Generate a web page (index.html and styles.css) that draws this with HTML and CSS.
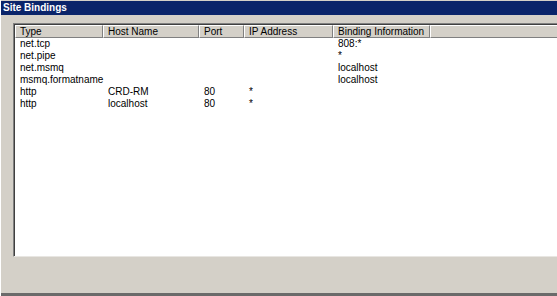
FILE: index.html
```html
<!DOCTYPE html>
<html lang="en">
<head>
  <meta charset="UTF-8">
  <title>Site Bindings</title>
  <link rel="stylesheet" href="styles.css">
</head>
<body>
  <div class="window">
    <div class="titlebar">Site Bindings</div>
    <div class="content">
      <div class="listview">
        <div class="header">
          <div class="col">Type</div>
          <div class="col">Host Name</div>
          <div class="col">Port</div>
          <div class="col">IP Address</div>
          <div class="col">Binding Information</div>
          <div class="col filler"></div>
        </div>
        <div class="rows">
          <div class="row"><span>net.tcp</span><span></span><span></span><span></span><span>808:*</span></div>
          <div class="row"><span>net.pipe</span><span></span><span></span><span></span><span>*</span></div>
          <div class="row"><span>net.msmq</span><span></span><span></span><span></span><span>localhost</span></div>
          <div class="row"><span>msmq.formatname</span><span></span><span></span><span></span><span>localhost</span></div>
          <div class="row"><span>http</span><span>CRD-RM</span><span>80</span><span>*</span><span></span></div>
          <div class="row"><span>http</span><span>localhost</span><span>80</span><span>*</span><span></span></div>
        </div>
      </div>
    </div>
    <div class="footer"></div>
  </div>
</body>
</html>
```

FILE: styles.css
```css
body {
  margin: 0;
  background: #d4d0c8;
  font-family: "Liberation Sans", Arial, sans-serif;
  font-size: 10px;
  color: #000;
}
.window {
  width: 557px;
  height: 296px;
  display: flex;
  flex-direction: column;
  border-left: 1px solid #ffffff;
  box-sizing: border-box;
  overflow: hidden;
}
.titlebar {
  margin-top: 1px;
  height: 14px;
  background: #0a246a;
  color: #fff;
  font-weight: bold;
  font-size: 10px;
  line-height: 14px;
  padding-left: 2px;
}
.content {
  flex: 1;
  padding: 8px 0 0 12px;
  display: flex;
}
.listview {
  flex: 1;
  margin-right: -20px;
  height: 234px;
  background: #fff;
  border-top: 1px solid #808080;
  border-left: 1px solid #808080;
  box-shadow: inset 1px 1px 0 #404040;
  border-bottom: 1px solid #e8e6e2;
  padding: 1px 0 0 1px;
  box-sizing: border-box;
}
.header {
  display: grid;
  grid-template-columns: 88px 96px 45px 89px 97px 1fr;
  height: 13px;
  background: #d4d0c8;
}
.col {
  border-top: 1px solid #fff;
  border-left: 1px solid #fff;
  border-right: 1px solid #808080;
  border-bottom: 1px solid #808080;
  padding-left: 4px;
  line-height: 12px;
  white-space: nowrap;
  overflow: hidden;
}
.filler {
  border-right: none;
}
.row {
  display: grid;
  grid-template-columns: 88px 96px 45px 89px 97px;
  height: 12px;
  line-height: 12px;
}
.row span {
  padding-left: 5px;
  white-space: nowrap;
}
.footer {
  height: 3px;
  background: #6a6a6a;
}
```
